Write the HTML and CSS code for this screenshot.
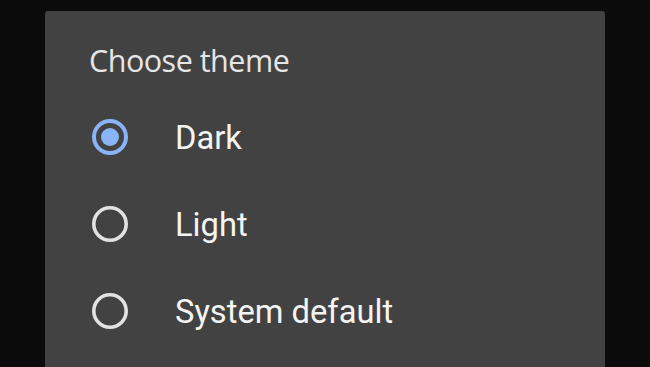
FILE: index.html
```html
<!DOCTYPE html>
<html>
<head>
<meta charset="utf-8">
<link rel="stylesheet" href="styles.css">
</head>
<body>
<div class="dialog">
  <div class="title">Choose theme</div>
  <div class="options">
    <div class="option">
      <svg class="radio" viewBox="0 0 36 36" width="36" height="36"><circle cx="18" cy="18" r="16" fill="none" stroke="#8ab4f8" stroke-width="4"/><circle cx="18" cy="18" r="9" fill="#8ab4f8"/></svg>
      <span class="label">Dark</span>
    </div>
    <div class="option">
      <svg class="radio" viewBox="0 0 36 36" width="36" height="36"><circle cx="18" cy="18" r="16.2" fill="none" stroke="#e2e2e2" stroke-width="3.6"/></svg>
      <span class="label">Light</span>
    </div>
    <div class="option">
      <svg class="radio" viewBox="0 0 36 36" width="36" height="36"><circle cx="18" cy="18" r="16.2" fill="none" stroke="#e2e2e2" stroke-width="3.6"/></svg>
      <span class="label">System default</span>
    </div>
  </div>
</div>
</body>
</html>
```
FILE: styles.css
```css
html, body {
  margin: 0;
  padding: 0;
  background: #0b0b0b;
  overflow: hidden;
  height: 367px;
}
.dialog {
  margin: 11px 0 0 45px;
  width: 560px;
  height: 356px;
  overflow: hidden;
  background: #424242;
  border-radius: 3px 3px 0 0;
  padding-top: 29px;
  box-sizing: border-box;
}
.title {
  font-family: "Open Sans", sans-serif;
  font-size: 30.5px;
  font-weight: 500;
  letter-spacing: -0.5px;
  line-height: 40px;
  color: #e6e6e6;
  padding-left: 44px;
}
.options {
  margin-top: 13px;
}
.option {
  display: flex;
  align-items: center;
  height: 87px;
}
.radio {
  margin-left: 47px;
  flex: none;
}
.label {
  margin-left: 47px;
  padding-top: 3px;
  font-family: Roboto, sans-serif;
  font-size: 32.7px;
  color: #f4f4f4;
}
```
